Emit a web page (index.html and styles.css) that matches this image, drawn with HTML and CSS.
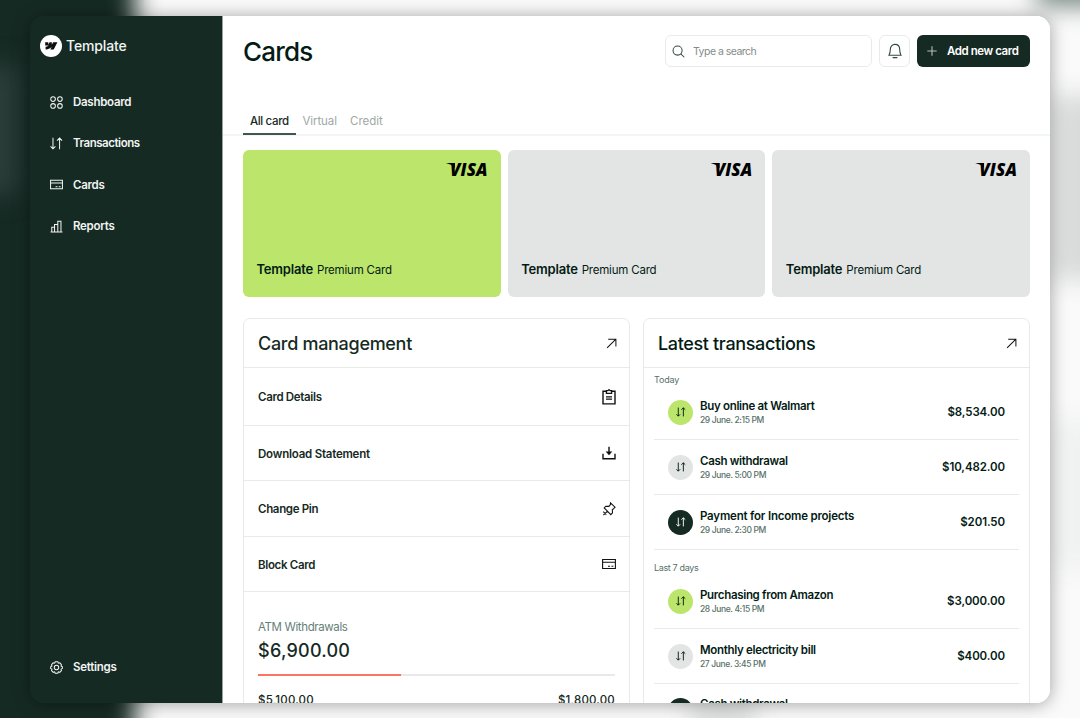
FILE: index.html
```html
<!DOCTYPE html>
<html lang="en">
<head>
<meta charset="utf-8">
<title>Cards</title>
<link rel="stylesheet" href="styles.css">
</head>
<body>
<svg width="0" height="0" class="defs" aria-hidden="true">
  <symbol id="swap" viewBox="0 0 14 14"><path d="M3.2 .8v12M.6 10.2l2.6 2.6 2.6-2.6M10.3 13.2v-12M7.6 3.8l2.7-2.7L13 3.8"/></symbol>
  <symbol id="card" viewBox="0 0 14 12"><path d="M.6 1.500h12.800v9H.6zM.6 4.300h12.800M6 8.300h2M9.400 8.300h2"/></symbol>
  <symbol id="arrow" viewBox="0 0 12 12"><path d="M1.2 10.8 10.500 1.500M2.400 1.400h8.400v8"/></symbol>
</svg>
<div class="backdrop"><i class="side"></i><i class="glow"></i><i class="corner"></i><i class="right"></i><i class="right low"></i><i class="foot"></i></div>
<div class="window">
  <aside class="sidebar">
    <div class="brand">
      <svg class="mark" viewBox="0 0 22 22"><circle cx="11" cy="11" r="11" fill="#fff"/><path fill="#0b0f0e" d="M17.400 7.300 13.700 14.600h-3.400l1.500-3C10.500 13.300 8.700 14.400 5.600 14.600v-2.900s1.900-.1 3-1.200H5.200V7.300h3.100v2.500l1.300-2.500h2.200v2.500l1.400-2.500z"/></svg>
      <span>Template</span>
    </div>
    <nav class="nav">
      <a><svg viewBox="0 0 14 14"><circle cx="3.300" cy="3.300" r="2.500"/><circle cx="10.700" cy="3.300" r="2.500"/><circle cx="3.300" cy="10.700" r="2.500"/><circle cx="10.700" cy="10.700" r="2.500"/></svg><span>Dashboard</span></a>
      <a><svg><use href="#swap"/></svg><span class="tight">Transactions</span></a>
      <a><svg><use href="#card"/></svg><span>Cards</span></a>
      <a><svg viewBox="0 0 14 14"><path d="M.6 12.800h12.800M1.900 12.800V7.800h3M4.900 12.800V4.800h3.500M8.400 12.800V1.300h3.400v11.500"/></svg><span>Reports</span></a>
    </nav>
    <a class="settings"><svg viewBox="0 0 14 14"><circle cx="7" cy="7" r="2.400"/><path d="M5.600.8h2.800l.6 1.500 1.600-.3 1.700 1.900-.4 1.500 1.400.8v1.800l-1.400.8.4 1.500-1.800 1.900-1.500-.5-.6 1.500H5.600L5 11.700l-1.500.5-1.800-1.900.4-1.500L.7 8V6.200l1.400-.8-.4-1.500L3.400 2l1.600.3z"/></svg><span>Settings</span></a>
  </aside>
  <main class="main">
    <header class="header">
      <h1>Cards</h1>
      <div class="search"><svg viewBox="0 0 14 14"><circle cx="6" cy="6" r="4.900"/><path d="m9.500 9.500 3.700 3.700"/></svg><span>Type a search</span></div>
      <div class="bell"><svg viewBox="0 0 14 16"><path d="M1 12.200c1-1.700 1.300-3 1.300-5.600C2.300 3.500 4.200 1.400 7 1.400s4.700 2.100 4.700 5.200c0 2.600.3 3.900 1.300 5.600zM4.600 14.600h4.800"/></svg></div>
      <div class="add"><svg viewBox="0 0 10 10"><path d="M5 .3v9.400M.3 5h9.400"/></svg><span>Add new card</span></div>
    </header>
    <div class="tabs"><span class="tab active">All card</span><span class="tab virtual">Virtual</span><span class="tab credit">Credit</span></div>
    <section class="cards">
      <article class="pay lime"><div class="visa">VISA</div><p><b>Template</b><span>Premium Card</span></p></article>
      <article class="pay"><div class="visa">VISA</div><p><b>Template</b><span>Premium Card</span></p></article>
      <article class="pay"><div class="visa">VISA</div><p><b>Template</b><span>Premium Card</span></p></article>
    </section>
    <section class="panels">
      <div class="panel">
        <div class="panel-head"><h2 class="h-manage">Card management</h2><svg><use href="#arrow"/></svg></div>
        <div class="row first"><span>Card Details</span><svg viewBox="0 0 14 16"><path stroke-width="1.400" d="M4.300 2.300H1v12.600h12V2.300H9.700"/><path stroke-width="1.300" d="M4.400 1.700h1.400L7 .7l1.200 1h1.400v2.700H4.400zM4 7.800h6M4 10.100h6"/></svg></div>
        <div class="row"><span class="loose">Download Statement</span><svg viewBox="0 0 14 16"><path stroke-width="1.400" d="M1 8.700v5h12v-5M7 1.800v7"/><path fill="#111" stroke="none" d="M3.700 6.500h6.600L7 10.300z"/></svg></div>
        <div class="row mid"><span>Change Pin</span><svg viewBox="0 0 14 16"><path d="M8.500 1.900 13 6.200 11.900 7.300l-1.600 1.500.2 3-1.700 1.900L2.200 6.900l1.600-1.700 3.100.2 1.400-1.600zM5.300 10.300 1.400 14M1.200 10.700l3.100 3"/></svg></div>
        <div class="row"><span>Block Card</span><svg><use href="#card"/></svg></div>
        <div class="atm">
          <span class="label">ATM Withdrawals</span>
          <strong>$6,900.00</strong>
          <div class="bar"><i style="width:40%"></i></div>
          <div class="ends"><span>$5,100.00</span><span>$1,800.00</span></div>
        </div>
      </div>
      <div class="panel">
        <div class="panel-head"><h2 class="h-latest">Latest transactions</h2><svg><use href="#arrow"/></svg></div>
        <div class="list">
          <div class="day">Today</div>
          <div class="tx"><i class="dot lime"><svg><use href="#swap"/></svg></i><div><b>Buy online at Walmart</b><small>29 June. 2:15 PM</small></div><em>$8,534.00</em></div>
          <div class="tx"><i class="dot"><svg><use href="#swap"/></svg></i><div><b>Cash withdrawal</b><small>29 June. 5:00 PM</small></div><em>$10,482.00</em></div>
          <div class="tx"><i class="dot dark"><svg><use href="#swap"/></svg></i><div><b class="loose">Payment for Income projects</b><small>29 June. 2:30 PM</small></div><em>$201.50</em></div>
          <div class="day week">Last 7 days</div>
          <div class="tx"><i class="dot lime"><svg><use href="#swap"/></svg></i><div><b>Purchasing from Amazon</b><small>28 June. 4:15 PM</small></div><em>$3,000.00</em></div>
          <div class="tx"><i class="dot"><svg><use href="#swap"/></svg></i><div><b>Monthly electricity bill</b><small>27 June. 3:45 PM</small></div><em>$400.00</em></div>
          <div class="tx last"><i class="dot dark"><svg><use href="#swap"/></svg></i><div><b>Cash withdrawal</b></div></div>
        </div>
      </div>
    </section>
  </main>
</div>
</body>
</html>
```
FILE: styles.css
```css
* { box-sizing: border-box; margin: 0; padding: 0; }
body { width: 1080px; height: 718px; overflow: hidden; padding: 16px 30px 15px; font-family: Inter, "Liberation Sans", sans-serif; font-weight: 500; color: #162a24; position: relative; }
svg { fill: none; stroke: currentColor; stroke-width: 1.1; flex: none; }
.defs { position: absolute; }
i, em { font-style: normal; }

/* Blurred shapes behind the window */
.backdrop { position: absolute; inset: 0; overflow: hidden; background: #fafafa; }
.backdrop i { position: absolute; filter: blur(12px); }
.backdrop .side { left: -60px; top: -60px; width: 195px; height: 840px; background: #162a24; }
.backdrop .glow { left: -30px; top: 65px; width: 48px; height: 130px; background: #2b3e39; }
.backdrop .corner { left: 1037px; top: -30px; width: 80px; height: 36px; background: #768680; }
.backdrop .right { left: 1050px; top: 95px; width: 60px; height: 185px; background: #d8dbda; }
.backdrop .right.low { top: 420px; height: 150px; background: #f0f1f1; }
.backdrop .foot { left: 690px; top: 695px; width: 65px; height: 40px; background: #dcdfde; }

.window { position: relative; display: flex; width: 1020px; height: 687px; border-radius: 14px; overflow: hidden; background: linear-gradient(90deg, #162a24 100px, #fff 100px); box-shadow: 0 1px 18px rgba(0, 0, 0, .36); }
.sidebar { width: 193px; flex: none; background: #162a24; color: #f1f4f3; border-right: 1px solid #98a29f; padding: 19px 9px 26px; display: flex; flex-direction: column; font-size: 11.500px; font-weight: 600; letter-spacing: -.27px; }
.brand { display: flex; align-items: center; gap: 5px; height: 22px; font-size: 14px; font-weight: 500; letter-spacing: -.15px; }
.brand span { margin-top: -2px; }
.mark { width: 22px; height: 22px; stroke: none; margin-left: 1px; margin-right: -1px; }
.nav { display: flex; flex-direction: column; gap: 21.400px; padding: 35px 11px 0; }
.nav a, .settings { display: flex; align-items: center; gap: 10px; height: 20px; }
.nav svg, .settings svg { width: 13px; height: 13px; stroke-width: 1.100; }
.nav .tight { letter-spacing: -.45px; }
.settings { margin: auto 11px 0; }

.main { flex: 1; background: #fff; }
.header { display: flex; align-items: center; padding: 19px 20px 0; height: 51px; }
h1 { font-size: 26px; font-weight: 500; line-height: 32px; color: #041b15; margin-right: auto; padding-top: 2px; letter-spacing: -.8px; }
.search, .bell { border: 1px solid #e9ebea; border-radius: 6px; height: 32px; display: flex; align-items: center; }
.search { width: 207px; padding-left: 6px; gap: 8px; color: #848c89; font-size: 10.500px; font-weight: 400; letter-spacing: -.52px; }
.search svg { width: 13px; height: 13px; color: #324a43; }
.bell { width: 31px; margin: 0 7px; justify-content: center; color: #324a43; }
.bell svg { width: 14px; height: 16px; }
.add { width: 113px; height: 32px; border-radius: 6px; background: #162a24; color: #fff; display: flex; align-items: center; padding-left: 10px; gap: 10px; font-size: 11.500px; font-weight: 600; letter-spacing: -.43px; white-space: nowrap; }
.add svg { width: 10px; height: 10px; color: #b5bdba; }

.tabs { display: flex; height: 69px; align-items: flex-end; border-bottom: 2px solid #f4f5f5; padding-left: 20px; font-size: 11.500px; color: #a0a8a5; font-weight: 400; }
.tab { height: 28px; line-height: 28px; padding: 0 7px; margin-bottom: -1px; }
.tab.active { color: #162a24; border-bottom: 2px solid #3f5750; width: 52.500px; font-weight: 500; white-space: nowrap; letter-spacing: -.35px; }
.tab.virtual { width: 47.500px; letter-spacing: -.1px; }

.cards { display: grid; grid-template-columns: repeat(3, 1fr); gap: 7px; padding: 14px 20px 0; }
.pay { height: 147px; border-radius: 6px; background: #e2e5e4; padding: 11px 13px 18px 13.500px; display: flex; flex-direction: column; justify-content: space-between; color: #041b15; }
.pay.lime { background: #bbe66b; }
.visa { position: relative; align-self: flex-end; font: italic 800 17px/17px "Open Sans", sans-serif; letter-spacing: .1px; color: #000; }
.visa::before { content: ""; position: absolute; left: -4px; top: 2px; width: 9px; height: 5px; background: #000; clip-path: polygon(0 0, 100% 0, 100% 100%, 55% 35%); }
.pay p { display: flex; align-items: baseline; gap: 4px; font-size: 11.500px; line-height: 18px; letter-spacing: -.2px; }
.pay b { font-size: 13px; font-weight: 600; }
.pay span { font-weight: 400; }

.panels { display: grid; grid-template-columns: 1fr 1fr; gap: 13px; padding: 21px 20px 0; }
.panel { height: 500px; border: 1px solid #e8eaea; border-radius: 7px; }
.panel-head { height: 49px; border-bottom: 1px solid #e8eaea; display: flex; align-items: center; justify-content: space-between; padding: 0 12px 0 14px; }
.panel-head svg { width: 11px; height: 11px; color: #111; }
h2 { font-size: 18px; font-weight: 500; }
.h-manage { letter-spacing: -.3px; }
.h-latest { letter-spacing: -.35px; color: #041b15; }
.row { display: flex; align-items: center; justify-content: space-between; height: 55px; padding: 0 13px 0 14px; border-bottom: 1px solid #e8eaea; font-size: 11.500px; font-weight: 600; letter-spacing: -.33px; }
.row .loose { letter-spacing: -.22px; }
.row.first { height: 58px; }
.row.mid { height: 56px; }
.row span { padding-top: 1px; }
.row svg { width: 14px; height: 16px; color: #111; }
.atm { padding: 27px 14px 0; display: flex; flex-direction: column; }
.label { font-size: 11.500px; line-height: 16px; font-weight: 400; color: #668078; letter-spacing: -.38px; }
.atm strong { font-size: 18px; font-weight: 500; line-height: 24px; margin-top: 4px; letter-spacing: .25px; }
.bar { height: 2px; background: #e8eaea; margin-top: 11px; }
.bar i { display: block; height: 2px; background: #fd7562; }
.ends { display: flex; justify-content: space-between; font-size: 11.500px; line-height: 16px; margin-top: 16px; letter-spacing: .2px; }

.list { padding: 0 10px; }
.day { font-size: 9px; line-height: 12px; height: 17px; padding-top: 6px; color: #587169; font-weight: 400; letter-spacing: -.15px; }
.day.week { height: 24px; padding-top: 12px; letter-spacing: -.35px; }
.tx { display: flex; align-items: center; height: 55px; border-bottom: 1px solid #e8eaea; padding: 0 14px; gap: 7px; color: #041b15; }
.tx.last { height: 40px; align-items: flex-start; padding-top: 14px; border-bottom: 0; }
.dot { width: 25px; height: 25px; border-radius: 50%; background: #e2e5e4; display: flex; align-items: center; justify-content: center; }
.dot.lime { background: #bbe66b; }
.dot.dark { background: #162a24; color: #fff; }
.dot svg { width: 10px; height: 10px; stroke-width: 1.300; }
.tx div { margin-right: auto; display: flex; flex-direction: column; }
.tx.last div { margin-top: -1px; }
.tx b { font-size: 11.500px; line-height: 15px; font-weight: 600; letter-spacing: -.32px; }
.tx b.loose { letter-spacing: -.2px; }
.tx small { font-size: 8.500px; line-height: 12px; color: #587169; letter-spacing: -.37px; }
.tx em { font-size: 11.500px; font-weight: 600; letter-spacing: -.1px; }
```
